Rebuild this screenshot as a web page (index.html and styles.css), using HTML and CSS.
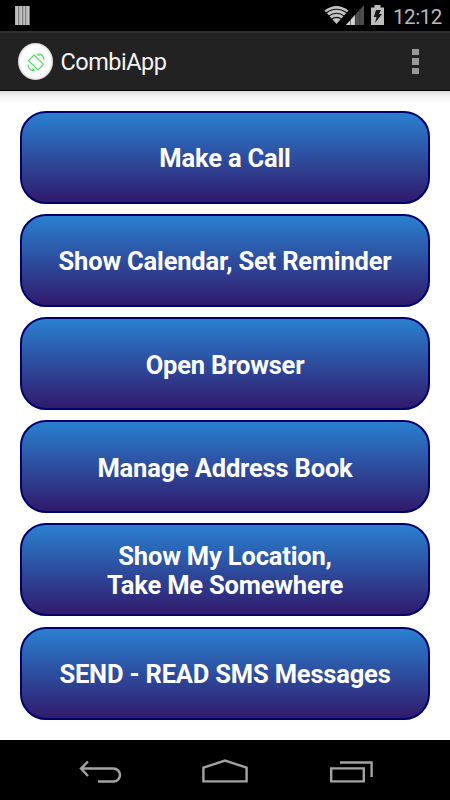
FILE: index.html
```html
<!DOCTYPE html>
<html lang="en">
<head>
<meta charset="utf-8">
<title>CombiApp</title>
<link rel="stylesheet" href="styles.css">
</head>
<body>
<div class="status">
  <div class="bars"><i></i><i></i><i></i><i></i></div>
  <div class="tray">
    <svg class="wifi" width="26" height="20" viewBox="0 0 26 20">
      <path d="M0.5 5.5Q12.5-3.5 24.5 5.5L12.5 19Z" fill="#c2c2c2"/>
      <path d="M1.6 8.2Q12.5.2 23.4 8.2M4.2 11.4Q12.5 5.2 20.8 11.4M7 14.6Q12.5 10.2 18 14.6" fill="none" stroke="#111" stroke-width="1.1"/>
    </svg>
    <svg class="signal" width="18" height="20" viewBox="0 0 18 20">
      <path d="M0 20L18 0V20Z" fill="#4d4d4d"/>
      <path d="M0 20L9 10V20Z" fill="#d6d6d6"/>
      <path d="M4.5 14V20M9.3 9V20M13.7 4V20" stroke="#333" stroke-width=".6"/>
    </svg>
    <svg class="battery" width="13" height="20" viewBox="0 0 13 20">
      <path d="M0 2.5H3.5V0H9.5V2.5H13V20H0Z" fill="#bdbdbd"/>
      <path d="M5 5H10L8 9H11L4 18L5.5 12H2.8Z" fill="#171717"/>
    </svg>
    <span class="clock">12:12</span>
  </div>
</div>
<header class="bar">
  <div class="logo">
    <svg width="20" height="20" viewBox="0 0 20 20" fill="none" stroke="#3fe457" stroke-width="1.1">
      <path d="M8 3L17.5 12.3L12 18L2.5 8.5Z"/>
      <path d="M11.5 2H14Q18 3.5 18 8.5M8.5 18.5H6Q2 16.5 2 12.5M11.5 2L13.5 4M8.5 18.5L6.5 16.5"/>
    </svg>
  </div>
  <h1 class="title">CombiApp</h1>
  <div class="more"><i></i><i></i><i></i></div>
</header>
<main class="menu">
  <button class="item">Make a Call</button>
  <button class="item">Show Calendar, Set Reminder</button>
  <button class="item">Open Browser</button>
  <button class="item">Manage Address Book</button>
  <button class="item">Show My Location,<br>Take Me Somewhere</button>
  <button class="item">SEND - READ SMS Messages</button>
</main>
<nav class="nav">
  <svg width="450" height="60" viewBox="0 0 450 60" fill="none" stroke="#a3a3a3" stroke-width="2.4">
    <path d="M81 28.5H113.5A6.4 6.4 0 0 1 113.5 41.5H98M88 21.5L81 28.5L88 36"/>
    <path d="M203.4 41.4V27.7L225 20.6L246.6 27.7V41.4Z"/>
    <path d="M331.2 28.4H363.8V41.4H331.2ZM340 22.5H371.6V37"/>
  </svg>
</nav>
</body>
</html>
```

FILE: styles.css
```css
* { box-sizing: border-box; }
body {
  margin: 0;
  width: 450px;
  height: 800px;
  display: flex;
  flex-direction: column;
  overflow: hidden;
  background: #fff;
  font-family: Roboto, sans-serif;
}
.status {
  height: 31px;
  flex: none;
  display: flex;
  justify-content: space-between;
  padding: 5px 8px 0 15px;
  background: #000;
}
.bars { display: flex; height: 20px; padding-top: 1px; }
.bars i { width: 3.75px; background: linear-gradient(90deg, #aaa, #c8c8c8 70%, #777 85%); }
.tray { display: flex; align-items: flex-start; }
.wifi { margin-right: -4px; }
.signal { margin-right: 7px; }
.battery { margin-right: 9px; }
.clock { width: 49px; font-size: 20.6px; line-height: 24px; letter-spacing: -0.5px; color: #b9b9b9; white-space: nowrap; }
.bar {
  height: 60px;
  flex: none;
  display: flex;
  align-items: center;
  padding: 0 31px 0 18px;
  background: #222;
  border-top: 2px solid #303030;
  border-bottom: 1px solid #000;
}
.logo {
  width: 35px;
  height: 37px;
  display: flex;
  align-items: center;
  justify-content: center;
  border-radius: 50%;
  background: #fff;
  box-shadow: inset 0 0 3px #999;
}
.title { margin: 1px 0 0 7.5px; font-size: 23.5px; line-height: 30px; font-weight: 400; letter-spacing: -0.5px; color: #f3f3f3; }
.more { margin-left: auto; display: flex; flex-direction: column; gap: 3px; }
.more i { width: 7px; height: 6.5px; background: #999; }
.menu {
  flex: 1;
  display: flex;
  flex-direction: column;
  gap: 10.1px;
  padding: 20.1px 20px 19px;
  background: linear-gradient(#ddd, #f5f5f5 6px, #fff 14px);
}
.item {
  height: 93px;
  flex: none;
  padding: 3px 0 0;
  border: 2px solid #00006b;
  border-radius: 26px;
  background: linear-gradient(#2a80d0, #311a6c);
  color: #fff;
  font: 700 25.5px/29.5px Roboto, sans-serif;
  letter-spacing: -0.18px;
}
.nav { height: 60px; flex: none; background: #000; }
.nav svg { display: block; }
```
